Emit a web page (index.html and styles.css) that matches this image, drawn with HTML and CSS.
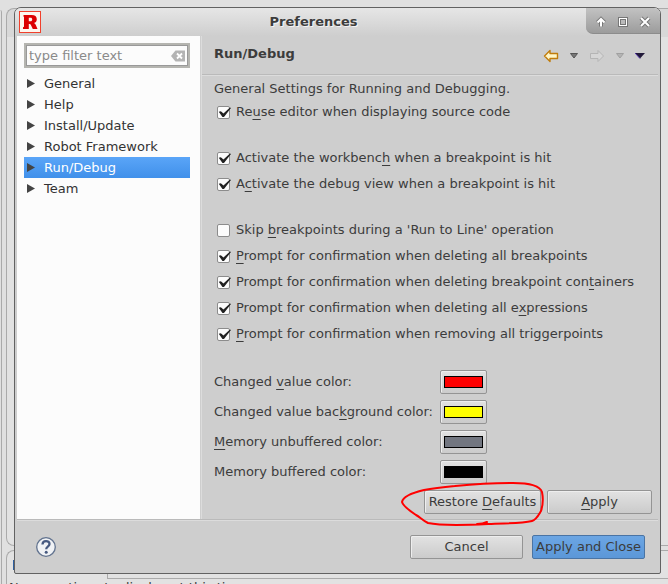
FILE: index.html
```html
<!DOCTYPE html>
<html lang="en">
<head>
<meta charset="utf-8">
<title>Preferences</title>
<link rel="stylesheet" href="styles.css">
</head>
<body>
<div class="workbench" aria-hidden="true">
  <div class="edge"></div>
  <div class="views">
    <div class="view view-editor"></div>
    <div class="view view-progress"><div class="tabs"><span class="tab-icon"></span><span class="tab"></span></div><p>No operations to display at this time.</p></div>
  </div>
</div>
<main class="dialog">
  <header class="titlebar">
    <svg class="logo" viewBox="0 0 22 22"><rect x=".5" y=".5" width="21" height="21" fill="#fdf6ee" stroke="#f0402c"/><path fill="#dc0000" fill-rule="evenodd" d="M4.500 4h8c3.600 0 5.300 1.500 5.300 4.200 0 2-1 3.200-2.800 3.800.8.300 1.300 1 1.700 1.800L18.500 18h-4.700l-1.900-3.900c-.4-.7-.8-1-1.600-1h-.5V18H4v-1.800l1-.4V6L4.500 5.600zM9.800 6.700v3.500h1.700c1.100 0 1.700-.6 1.700-1.800s-.6-1.700-1.700-1.700z"/></svg>
    <h1>Preferences</h1>
    <div class="controls">
      <button type="button" aria-label="Roll up"><svg viewBox="0 0 14 14"><path d="M7 11.500V5M3.500 7.500 7 4 10.500 7.500" class="ctl-shadow"/><path d="M7 11.500V5M3.500 7.500 7 4 10.500 7.500" class="ctl"/></svg></button>
      <button type="button" aria-label="Maximize"><svg viewBox="0 0 14 14"><rect x="2" y="2" width="10" height="10" fill="#777"/><rect x="3.500" y="3.500" width="7" height="7" fill="#bbb" stroke="#fff"/><rect x="4.500" y="4.500" width="5" height="5" fill="none" stroke="#777"/></svg></button>
      <button type="button" aria-label="Close"><svg viewBox="0 0 14 14"><path d="m3 3 8 8m0-8-8 8" class="ctl-shadow"/><path d="m3 3 8 8m0-8-8 8" class="ctl"/></svg></button>
    </div>
  </header>
  <div class="body">
    <nav class="sidebar">
      <div class="filter">
        <input type="text" placeholder="type filter text" aria-label="Filter">
        <button type="button" aria-label="Clear"><svg viewBox="0 0 14 12"><path d="M0 6 4.500.5H14v11H4.500z" fill="#b4b4b4"/><path d="m6 3.500 5 5m0-5-5 5" stroke="#fff" stroke-width="1.800"/></svg></button>
      </div>
      <ul>
        <li><a href="#general">General</a></li>
        <li><a href="#help">Help</a></li>
        <li><a href="#install">Install/Update</a></li>
        <li><a href="#robot">Robot Framework</a></li>
        <li><a href="#debug" class="selected">Run/Debug</a></li>
        <li><a href="#team">Team</a></li>
      </ul>
    </nav>
    <section class="page">
      <div class="page-head">
        <h2>Run/Debug</h2>
        <div class="history">
          <button type="button" class="arrow" aria-label="Back"><svg viewBox="0 0 16 14"><path d="M1.500 7 7 1.500V4.500h7.500v5H7v3z" fill="#fff6c8" stroke="#c07c0c" stroke-width="1.400" stroke-linejoin="round"/></svg></button>
          <button type="button" aria-label="Back history"><svg viewBox="0 0 10 6"><path d="M1.500.5h7L5 5z" fill="#777" stroke="#555"/></svg></button>
          <button type="button" class="arrow" aria-label="Forward" disabled><svg viewBox="0 0 16 14"><path d="M14.500 7 9 1.500V4.500H1.500v5H9v3z" fill="#d6d6d6" stroke="#b5b5b5" stroke-linejoin="round"/></svg></button>
          <button type="button" aria-label="Forward history" disabled><svg viewBox="0 0 10 6"><path d="M1.500.5h7L5 5z" fill="#b4b4b4" stroke="#a0a0a0"/></svg></button>
          <button type="button" aria-label="Menu"><svg viewBox="0 0 10 6"><path d="M0 0h10L5 5.500z" fill="#221a3a"/><path d="m0 0 5 5.500" stroke="#4a2ca0"/></svg></button>
        </div>
      </div>
      <div class="content">
        <p>General Settings for Running and Debugging.</p>
        <div class="checks first">
          <label><input type="checkbox" checked><span>Re<u>u</u>se editor when displaying source code</span></label>
        </div>
        <div class="checks">
          <label><input type="checkbox" checked><span>Activate the workbenc<u>h</u> when a breakpoint is hit</span></label>
          <label><input type="checkbox" checked><span>A<u>c</u>tivate the debug view when a breakpoint is hit</span></label>
        </div>
        <div class="checks">
          <label><input type="checkbox"><span>Skip <u>b</u>reakpoints during a 'Run to Line' operation</span></label>
          <label><input type="checkbox" checked><span><u>P</u>rompt for confirmation when deleting all breakpoints</span></label>
          <label><input type="checkbox" checked><span>Prompt for confirmation when deleting breakpoint con<u>t</u>ainers</span></label>
          <label><input type="checkbox" checked><span>Prompt for confirmation when deleting all e<u>x</u>pressions</span></label>
          <label><input type="checkbox" checked><span><u>P</u>rompt for confirmation when removing all triggerpoints</span></label>
        </div>
        <div class="colors">
          <label for="c1">Changed <u>v</u>alue color:</label><button type="button" id="c1" class="btn swatch red"><i></i></button>
          <label for="c2">Changed value bac<u>k</u>ground color:</label><button type="button" id="c2" class="btn swatch yellow"><i></i></button>
          <label for="c3"><u>M</u>emory unbuffered color:</label><button type="button" id="c3" class="btn swatch slate"><i></i></button>
          <label for="c4">Memory buffered color:</label><button type="button" id="c4" class="btn swatch black"><i></i></button>
        </div>
        <div class="page-actions">
          <div class="marked">
            <button type="button" class="btn">Restore <u>D</u>efaults</button>
            <svg class="ring" viewBox="0 0 146 48"><path d="M86 40q-4 2-10 2M54 4C75 2 95 1 112 1c18 0 27 3 29 9 1 5 1 13-1 19-3 5-5 9-9 10-12 3-26 2-44 3-20 1-46 2-60-1-6-3-8-6-12-8C9 29 2 23 1 20 2 15 10 11 23 8 33 6 43 5 54 4" fill="none" stroke="#f00" stroke-width="2" stroke-linecap="round"/></svg>
          </div>
          <button type="button" class="btn"><u>A</u>pply</button>
        </div>
      </div>
    </section>
  </div>
  <footer class="footer">
    <button type="button" class="help" aria-label="Help"><svg viewBox="0 0 20 20"><circle cx="10" cy="10" r="9.300" fill="#f0f2f5" stroke="#62738f" stroke-width="1.300"/><path d="M6.500 7.500C6.500 3 13.500 3 13.500 7c0 2.700-3.300 2.600-3.300 5.200" fill="none" stroke="#475a80" stroke-width="2.300"/><circle cx="10.200" cy="15.300" r="1.500" fill="#475a80"/></svg></button>
    <button type="button" class="btn">Cancel</button>
    <button type="button" class="btn primary">Apply and Close</button>
  </footer>
</main>
</body>
</html>
```

FILE: styles.css
```css
* { box-sizing: border-box; }
body {
  margin: 0;
  padding: 7px 7px 9px 14px;
  min-height: 100vh;
  position: relative;
  overflow: hidden;
  background: #e0e0e0;
  color: #3c3c3c;
  font: 13px/16px "DejaVu Sans", sans-serif;
}
h1, h2, p, ul { margin: 0; padding: 0; font-size: inherit; }
ul { list-style: none; }
button { font: inherit; color: inherit; margin: 0; padding: 0; border: 0; background: none; }
svg { display: block; }
u { text-decoration-thickness: 1px; text-underline-offset: 3px; }

/* Workbench window behind the dialog */
.workbench { position: absolute; inset: 0; display: flex; gap: 4px; overflow: hidden; }
.edge { width: 2px; margin-top: 10px; border-right: 1px solid #aaa; border-top-right-radius: 3px; }
.views { flex: 1; display: flex; flex-direction: column; gap: 4px; padding-top: 8px; }
.view { flex: none; border: 1px solid #aaa; border-right: 0; border-radius: 8px 0 0 8px; background: linear-gradient(#d8d8d8 28px, #e2e2e2 28px); }
.view-editor { height: 538px; }
.view-progress { height: 60px; background: #e2e2e2; }
.view p { padding: 1px 0 0 2px; }
.tabs { display: flex; align-items: center; gap: 84px; height: 28px; padding-left: 6px; }
.tab-icon { width: 10px; height: 10px; background: #2f5f9f; }
.tab { flex: 1; align-self: stretch; border: 1px solid #aaa; border-width: 0 0 1px 1px; }

/* Dialog */
.dialog {
  position: relative;
  border: 1px solid #626262;
  border-radius: 7px 7px 2px 2px;
  background: #cecece;
}
.titlebar {
  display: grid;
  grid-template-columns: 74px 1fr 74px;
  height: 28px;
  background: linear-gradient(#e6e6e6, #cecece);
  border-radius: 6px 6px 0 0;
}
.logo { width: 22px; height: 22px; margin: 3px 0 0 4px; }
.titlebar h1 { padding-top: 6px; padding-right: 48px; text-align: center; text-shadow: 1px 1px #f4f4f4; }
.controls {
  display: flex;
  align-items: center;
  justify-content: space-between;
  height: 26px;
  padding: 2px 8px 0;
  background: linear-gradient(#c2c2c2, #9c9c9c);
  border-bottom: 1px solid #8c8c8c;
  border-radius: 0 6px 0 7px;
}
.controls svg { width: 14px; height: 14px; }
.ctl, .ctl-shadow { fill: none; stroke: #fff; stroke-width: 2; }
.ctl-shadow { stroke: #777; stroke-width: 4; }

.body { display: flex; min-height: 484px; margin: 0 2px; border-bottom: 1px solid #bababa; box-shadow: 0 1px #dcdcdc; }
.sidebar { width: 183px; padding: 7px 10px 0 7px; background: #fcfcfc; }
.filter { display: flex; align-items: center; height: 25px; border: 2px solid #b5b5b0; padding: 0 3px; background: #fcfcfc; box-shadow: inset 0 0 0 1px #999; }
.filter input { flex: 1; min-width: 0; padding: 0; border: 0; outline: 0; background: none; font: inherit; }
.filter input::placeholder { color: #8a8a8a; opacity: 1; }
.filter svg { width: 14px; height: 12px; }
.sidebar ul { padding-top: 5px; }
.sidebar a { display: flex; align-items: center; gap: 9px; height: 21px; padding-left: 3px; color: #333; text-decoration: none; }
.sidebar a::before { content: ""; width: 8px; height: 9px; background: #444; clip-path: polygon(0 0, 100% 50%, 0 100%); }
.sidebar a.selected { color: #fff; background: linear-gradient(#5aa5f8, #4090ea); }

.page { flex: 1; display: flex; flex-direction: column; border-left: 1px solid #dcdcdc; margin-left: 1px; }
.page-head { display: flex; justify-content: space-between; height: 39px; border-bottom: 1px solid #bababa; box-shadow: 0 1px #dcdcdc; padding: 10px 13px 0 12px; }
.history { display: flex; align-items: center; gap: 10px; height: 20px; }
.history svg { width: 10px; height: 6px; }
.history .arrow svg { width: 16px; height: 14px; }
.content { flex: 1; display: flex; flex-direction: column; padding: 6px 6px 5px 12px; }
.checks { display: flex; flex-direction: column; gap: 2px; margin-bottom: 22px; }
.checks.first { margin-top: 3px; }
.checks label { display: flex; align-items: center; gap: 6px; height: 24px; padding-left: 3px; }
.checks input { appearance: none; display: grid; place-items: center; width: 13px; height: 13px; margin: 0; border: 1px solid #8c8c8c; border-radius: 2px; background: #fcfcfc; }
.checks input:checked::before { content: ""; width: 13px; height: 10px; background: #222; clip-path: polygon(6% 48%, 22% 42%, 42% 66%, 92% 4%, 100% 10%, 46% 100%, 34% 100%); }
.colors { display: grid; grid-template-columns: 226px 47px; gap: 6px 0; align-items: center; margin-top: 2px; }
.btn { height: 24px; border: 1px solid #949494; border-radius: 2px; background: linear-gradient(#e2e2e2, #cbcbcb); box-shadow: inset 1px 1px #eee; }
.swatch { padding: 5px 3px; }
.swatch i { display: block; height: 12px; border: 1px solid #000; }
.red i { background: #f00; }
.yellow i { background: #ff0; }
.slate i { background: #727680; }
.black i { background: #000; }
.page-actions { display: flex; justify-content: flex-end; gap: 6px; margin-top: 6px; }
.page-actions .btn { width: 105px; }
.marked { position: relative; }
.page-actions .marked .btn { width: 117px; }
.ring { position: absolute; left: -23px; top: -8px; width: 146px; height: 48px; }
.footer { display: flex; gap: 9px; align-items: center; height: 53px; padding: 0 15px 0 21px; }
.footer .btn { width: 113px; }
.help { margin-right: auto; }
.help svg { width: 20px; height: 20px; }
.btn.primary { border-color: #4a74a4; background: linear-gradient(#6ca6e4, #5b97d8); box-shadow: none; }
```
